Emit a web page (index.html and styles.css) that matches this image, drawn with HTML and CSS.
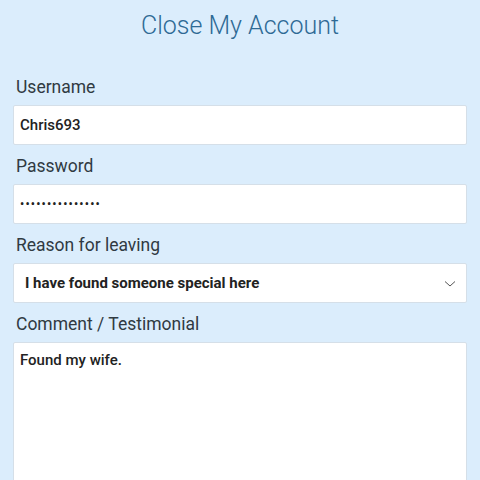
FILE: index.html
```html
<!DOCTYPE html>
<html lang="en">
<head>
<meta charset="utf-8">
<title>Close My Account</title>
<link rel="stylesheet" href="styles.css">
</head>
<body>
<main class="page">
  <h1 class="title">Close My Account</h1>
  <form class="form">
    <div class="field">
      <label class="label" for="username">Username</label>
      <div class="box" id="username">Chris693</div>
    </div>
    <div class="field">
      <label class="label" for="password">Password</label>
      <div class="box box-password" id="password">•••••••••••••••</div>
    </div>
    <div class="field">
      <label class="label" for="reason">Reason for leaving</label>
      <div class="box box-select" id="reason">
        <span class="select-value">I have found someone special here</span>
        <svg class="chevron" width="12" height="8" viewBox="0 0 12 8"><path d="M1 1.5 L6 6 L11 1.5" fill="none" stroke="#555" stroke-width="1"/></svg>
      </div>
    </div>
    <div class="field">
      <label class="label" for="comment">Comment / Testimonial</label>
      <div class="box box-area" id="comment">Found my wife.</div>
    </div>
  </form>
</main>
</body>
</html>
```
FILE: styles.css
```css
html, body {
  margin: 0;
  padding: 0;
  background: #dbedfc;
  font-family: Roboto, "Liberation Sans", sans-serif;
  color: #2b2b2b;
}

body {
  height: 480px;
  overflow: hidden;
}

.page {
  padding: 0 13px;
}

.title {
  margin: 0;
  padding-top: 12px;
  height: 66px;
  box-sizing: border-box;
  text-align: center;
  font-size: 25px;
  line-height: 28px;
  font-weight: 300;
  color: #2e6a95;
}

.form {
  display: flex;
  flex-direction: column;
}

.field {
  display: flex;
  flex-direction: column;
}

.label {
  display: block;
  padding-left: 3px;
  height: 39px;
  line-height: 26px;
  padding-top: 8px;
  box-sizing: border-box;
  font-size: 17.5px;
  color: #303a42;
}

.box {
  height: 40px;
  box-sizing: border-box;
  background: #fff;
  border: 1px solid #d5dfe8;
  border-radius: 2px;
  padding: 0 6px;
  display: flex;
  align-items: center;
  font-size: 15px;
  font-weight: 500;
  color: #222;
}

.box-password {
  font-size: 12px;
  letter-spacing: 1.2px;
}

.box-select {
  justify-content: space-between;
  padding: 0 10px 0 11px;
  font-weight: 700;
}

.chevron {
  display: block;
  margin-top: 1px;
}

.box-area {
  align-items: flex-start;
  height: 160px;
  padding-top: 8px;
  font-size: 15px;
}
```
